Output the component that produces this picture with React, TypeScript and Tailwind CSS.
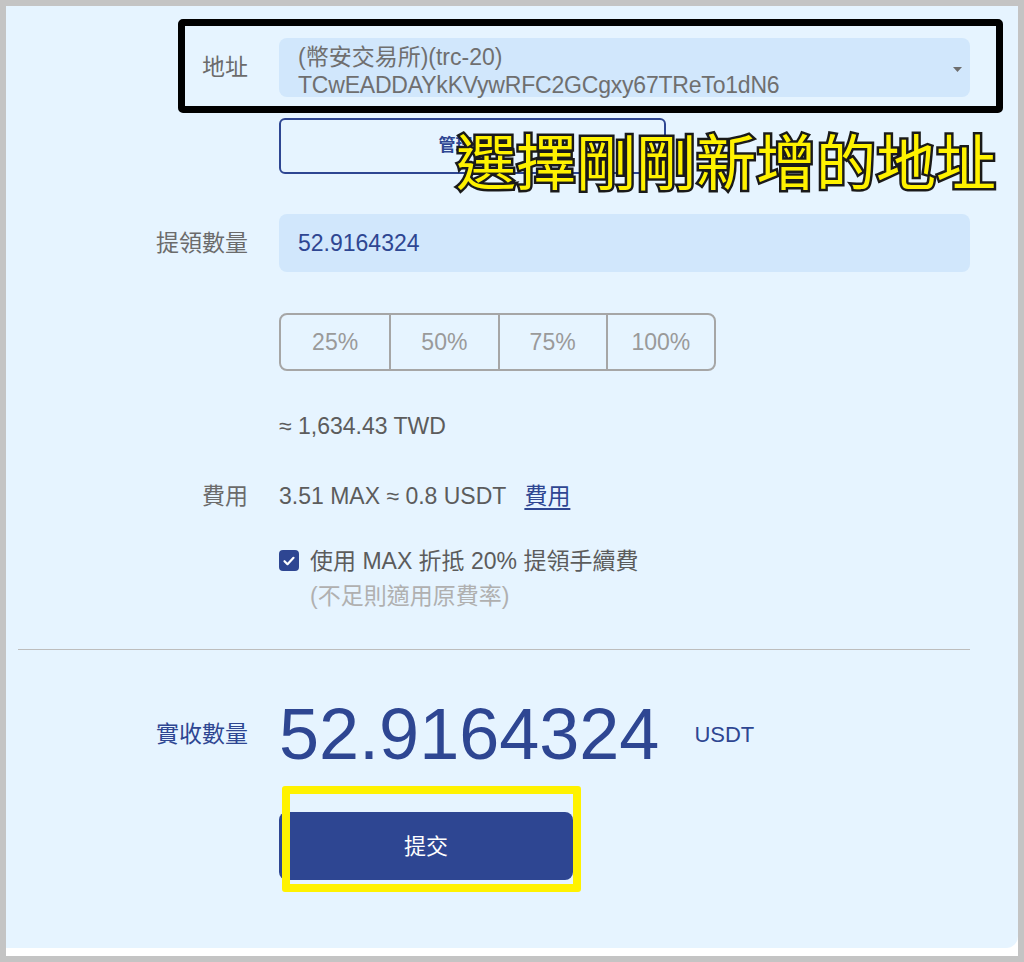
import React from "react";

const blue = "text-[#2e4692]";

function Caret() {
  return (
    <svg width="9" height="5" viewBox="0 0 9 5" className="shrink-0">
      <polygon points="0,0 9,0 4.5,5" fill="#6e6e6e" />
    </svg>
  );
}

function Row({ label, labelClass = "text-[#6b6b6b]", children, className = "" }: { label?: string; labelClass?: string; children: React.ReactNode; className?: string }) {
  return (
    <div className={`flex items-center ${className}`}>
      <div className={`w-[242px] shrink-0 text-right ${labelClass}`}>{label}</div>
      <div className="ml-[31px] w-[691px]">{children}</div>
    </div>
  );
}

export default function App() {
  return (
    <div className="relative h-[962px] w-[1024px] overflow-hidden bg-[#c4c4c4] px-[6px] pt-[6px] font-[Liberation_Sans,Noto_Sans_CJK_TC,sans-serif] text-[23px] leading-[1.5]">
      <div className="bg-white pb-[8px]">
        <div className="h-[942px] rounded-br-[12px] bg-[#e6f4ff] pt-[32px]">
          {/* address */}
          <Row label="地址">
            <div className="flex h-[59px] items-start justify-between rounded-[8px] bg-[#d1e7fc] pl-[19px] pr-[8px] pt-[5px] text-[#6f6f6f]">
              <div className="leading-[28px]">
                <div>(幣安交易所)(trc-20)</div>
                <div className="tracking-[-0.2px]">TCwEADDAYkKVywRFC2GCgxy67TReTo1dN6</div>
              </div>
              <div className="mt-[24px]">
                <Caret />
              </div>
            </div>
          </Row>

          <Row className="mt-[21px]">
            <button className={`flex h-[56px] w-[387px] items-center justify-center rounded-[6px] border-2 border-[#2e4692] text-[17px] font-bold ${blue}`}>
              管理地址
            </button>
          </Row>

          {/* amount */}
          <Row label="提領數量" className="mt-[40px]">
            <div className={`flex h-[58px] items-center rounded-[8px] bg-[#d1e7fc] pl-[19px] ${blue}`}>52.9164324</div>
          </Row>

          <Row className="mt-[41px]">
            <div className="grid h-[58px] w-[437px] grid-cols-4 rounded-[8px] border-2 border-[#a6a6a6] text-[#9a9a9a]">
              <div className="flex items-center justify-center">25%</div>
              <div className="flex items-center justify-center border-l-2 border-[#a6a6a6]">50%</div>
              <div className="flex items-center justify-center border-l-2 border-[#a6a6a6]">75%</div>
              <div className="flex items-center justify-center border-l-2 border-[#a6a6a6]">100%</div>
            </div>
          </Row>

          <Row className="mt-[38px]">
            <div className="text-[#5c5c5c]">≈ 1,634.43 TWD</div>
          </Row>

          {/* fee */}
          <Row label="費用" className="mt-[35px]">
            <div className="flex items-center text-[#5c5c5c]">
              <span>3.51 MAX ≈ 0.8 USDT</span>
              <a className={`ml-[18px] underline underline-offset-4 ${blue}`}>費用</a>
            </div>
          </Row>

          <Row className="mt-[31px]">
            <div className="flex items-start">
              <div className="mt-[6px] flex h-[21px] w-[20px] shrink-0 items-center justify-center rounded-[4px] bg-[#2e4692]">
                <svg width="14" height="14" viewBox="0 0 14 14">
                  <path d="M2.5 7.2l3 3L11.5 3.8" fill="none" stroke="white" strokeWidth="2.2" strokeLinecap="round" strokeLinejoin="round" />
                </svg>
              </div>
              <div className="ml-[11px]">
                <div className="text-[#5c5c5c]">使用 MAX 折抵 20% 提領手續費</div>
                <div className="text-[#b0b0b0]">(不足則適用原費率)</div>
              </div>
            </div>
          </Row>

          <div className="ml-[12px] mt-[36px] h-px w-[952px] bg-[#bdbdbd]" />

          {/* received */}
          <Row label="實收數量" labelClass={blue} className="mt-[48px]">
            <div className={`flex items-center ${blue}`}>
              <span className="text-[72px] leading-[72px]">52.9164324</span>
              <span className="ml-[35px] text-[22px]">USDT</span>
            </div>
          </Row>

          <Row className="mt-[42px]">
            <button className="flex h-[68px] w-[294px] items-center justify-center rounded-[8px] bg-[#2e4692] text-[22px] text-white">
              提交
            </button>
          </Row>
        </div>
      </div>

      {/* annotations */}
      <div className="absolute left-[178px] top-[19px] h-[94px] w-[825px] rounded-[5px] border-[7px] border-black" />
      <div className="absolute left-[282px] top-[786px] h-[106px] w-[299px] rounded-[3px] border-[8px] border-[#fff200]" />
      <div className="absolute left-[456px] top-[129px] whitespace-nowrap font-[Noto_Sans_CJK_TC,sans-serif] text-[60px] font-normal leading-none text-[#fff200] [paint-order:stroke_fill] [-webkit-text-stroke:5px_#1a1a1a]">
        選擇剛剛新增的地址
      </div>
    </div>
  );
}
